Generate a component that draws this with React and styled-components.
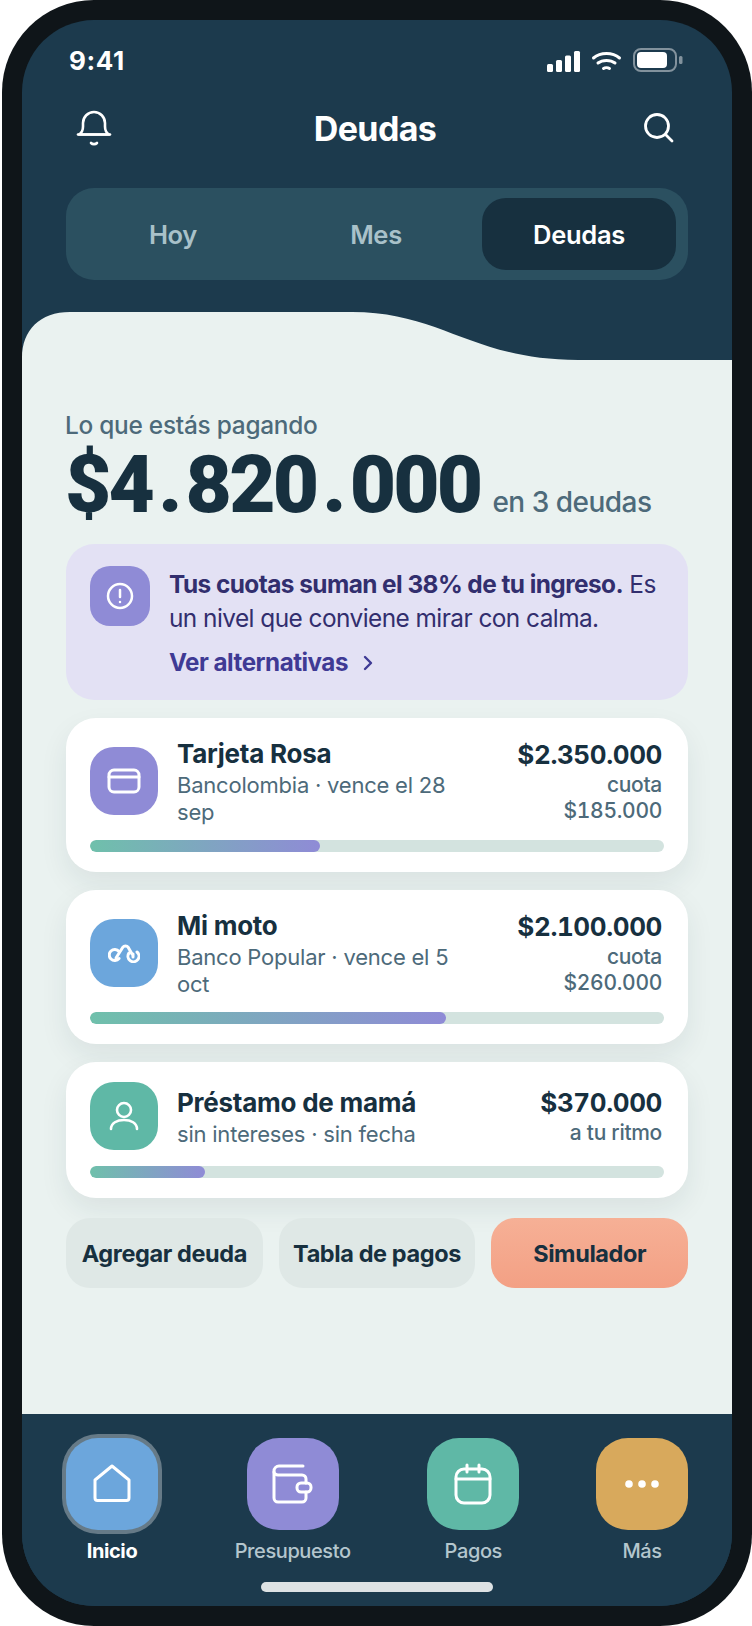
import React from 'react';
import styled, { createGlobalStyle } from 'styled-components';

const Global = createGlobalStyle`
  html, body {
    margin: 0;
    padding: 0;
    background: #fff;
  }
  body {
    font-family: 'Inter', 'Noto Sans', sans-serif;
  }
  * { box-sizing: border-box; }
`;

// Device
const Phone = styled.div`
  width: 750px;
  height: 1626px;
  margin-left: 2px;
  background: #0f1519;
  border-radius: 92px;
  padding: 20px;
`;

const Screen = styled.div`
  height: 100%;
  border-radius: 72px;
  overflow: hidden;
  background: #1c3a4d;
  display: flex;
  flex-direction: column;
`;

// Header
const StatusBar = styled.div`
  height: 38px;
  margin-top: 21px;
  padding: 0 49px 0 47px;
  display: flex;
  align-items: center;
  justify-content: space-between;
  color: #fff;
`;

const Clock = styled.span`
  font-size: 26px;
  font-weight: 700;
  letter-spacing: 0.6px;
`;

const StatusIcons = styled.svg`
  display: block;
`;

const TitleRow = styled.div`
  height: 48px;
  margin-top: 25px;
  padding: 0 58px 0 54px;
  display: grid;
  grid-template-columns: 1fr auto 1fr;
  align-items: center;
  & > svg:last-child { justify-self: end; }
`;

const Title = styled.h1`
  margin: 0;
  font-size: 34px;
  font-weight: 700;
  letter-spacing: -0.6px;
  color: #fff;
`;

const Segment = styled.div`
  margin: 36px 44px 0;
  height: 92px;
  padding: 10px 12px 10px 10px;
  border-radius: 28px;
  background: #2b5060;
  display: flex;
  gap: 9px;
`;

const Tab = styled.div`
  flex: 1;
  border-radius: 24px;
  display: flex;
  align-items: center;
  justify-content: center;
  font-size: 25.5px;
  font-weight: 600;
  letter-spacing: -0.3px;
  color: ${p => (p.$active ? '#fff' : '#a9c1c9')};
  background: ${p => (p.$active ? '#17303f' : 'transparent')};
`;

const Wave = styled.svg`
  display: block;
  margin-top: 32px;
  flex: none;
`;

// Main content
const Main = styled.main`
  flex: 1;
  background: #eaf2f0;
  padding: 50px 44px 0;
  display: flex;
  flex-direction: column;
`;

const Kicker = styled.div`
  font-size: 24.4px;
  line-height: 30px;
  font-weight: 500;
  letter-spacing: -0.25px;
  margin-left: -1px;
  color: #4d6a7a;
`;

const TotalRow = styled.div`
  display: flex;
  align-items: baseline;
  gap: 12px;
  margin-top: 3px;
`;

const Total = styled.div`
  font-family: 'Roboto', sans-serif;
  font-size: 80px;
  line-height: 84px;
  font-weight: 900;
  letter-spacing: -2.8px;
  margin-left: -1px;
  color: #17303f;
`;

const Dot = styled.span`
  margin: 0 6px;
`;

const TotalNote = styled.div`
  font-size: 28px;
  font-weight: 500;
  letter-spacing: -0.5px;
  color: #4d6a7a;
`;

const Alert = styled.div`
  margin-top: 17px;
  height: 156px;
  padding: 23px 24px;
  border-radius: 28px;
  background: #e3e1f4;
  display: flex;
  gap: 19px;
`;

const AlertIcon = styled.div`
  width: 60px;
  height: 60px;
  flex: none;
  margin-top: -1px;
  border-radius: 20px;
  background: #8f8bd6;
  display: flex;
  align-items: center;
  justify-content: center;
`;

const AlertText = styled.p`
  margin: 0;
  font-size: 24.4px;
  line-height: 34px;
  letter-spacing: -0.55px;
  color: #322e6e;
  strong { font-weight: 700; }
`;

const AlertLink = styled.div`
  margin-top: 11px;
  font-size: 24.2px;
  line-height: 34px;
  font-weight: 700;
  letter-spacing: -0.5px;
  color: #3f3a94;
  display: flex;
  align-items: center;
  gap: 15px;
`;

const Card = styled.div`
  margin-top: 18px;
  padding: 20px 24px;
  border-radius: 30px;
  background: #fff;
  box-shadow: 0 12px 28px rgba(23, 48, 63, 0.08);
`;

const CardRow = styled.div`
  display: flex;
  align-items: center;
  gap: 19px;
`;

const CardIcon = styled.div`
  width: 68px;
  height: 68px;
  flex: none;
  border-radius: 24px;
  background: ${p => p.$color};
  display: flex;
  align-items: center;
  justify-content: center;
`;

const CardBody = styled.div`
  flex: 1;
  min-width: 0;
`;

const CardName = styled.div`
  font-size: 26px;
  line-height: 32px;
  font-weight: 700;
  letter-spacing: -0.25px;
  color: #17303f;
`;

const CardSub = styled.div`
  margin: 2px 0 -2px;
  font-size: 22px;
  line-height: 27px;
  letter-spacing: -0.22px;
  color: #4d6a7a;
  max-width: 285px;
`;

const CardRight = styled.div`
  flex: none;
  width: 160px;
  margin-right: 2px;
  text-align: right;
`;

const Amount = styled.div`
  font-size: 26px;
  line-height: 32px;
  font-weight: 700;
  font-variant-numeric: tabular-nums;
  letter-spacing: -0.4px;
  color: #17303f;
`;

const AmountNote = styled.div`
  margin: 1px 0 -1px;
  font-size: 21px;
  line-height: 26px;
  font-weight: 500;
  letter-spacing: -0.3px;
  font-variant-numeric: tabular-nums;
  color: #4d6a7a;
`;

const Track = styled.div`
  margin-top: 16px;
  height: 12px;
  border-radius: 6px;
  background: #d3e3df;
  overflow: hidden;
`;

const Fill = styled.div`
  height: 100%;
  border-radius: 6px;
  background: linear-gradient(90deg, #6fc0ab, #8f8bd6);
`;

const Actions = styled.div`
  margin-top: 20px;
  display: flex;
  gap: 16px;
`;

const ActionButton = styled.div`
  flex: 1;
  height: 70px;
  border-radius: 24px;
  display: flex;
  align-items: center;
  justify-content: center;
  font-size: 23.5px;
  font-weight: 700;
  letter-spacing: -0.4px;
  color: #17303f;
  background: ${p => (p.$primary ? 'linear-gradient(180deg, #f6b096, #f3a084)' : '#dfe8e6')};
`;

// Bottom navigation
const BottomNav = styled.nav`
  flex: none;
  height: 192px;
  background: #1c3a4d;
  padding: 24px 44px 0;
  display: flex;
  flex-direction: column;
`;

const NavItems = styled.div`
  display: flex;
  justify-content: space-between;
`;

const NavItem = styled.div`
  min-width: 92px;
  display: flex;
  flex-direction: column;
  align-items: center;
`;

const NavIcon = styled.div`
  width: 92px;
  height: 92px;
  border-radius: 32px;
  background: ${p => p.$color};
  box-shadow: ${p => (p.$active ? '0 0 0 4px rgba(255, 255, 255, 0.33)' : 'none')};
  display: flex;
  align-items: center;
  justify-content: center;
`;

const NavLabel = styled.div`
  margin-top: 8px;
  font-size: 20px;
  line-height: 26px;
  font-weight: ${p => (p.$active ? 700 : 500)};
  letter-spacing: -0.4px;
  color: ${p => (p.$active ? '#fff' : '#b4c6cd')};
`;

const HomeBar = styled.div`
  width: 232px;
  height: 10px;
  margin: 18px auto 0;
  border-radius: 5px;
  background: #dde2e4;
`;

const Line = ({ w, h, children, sw = 3 }) => (
  <svg width={w} height={h} viewBox={`0 0 ${w} ${h}`} fill="none" stroke="#fff" strokeWidth={sw} strokeLinecap="round" strokeLinejoin="round">
    {children}
  </svg>
);

const debts = [
  {
    name: 'Tarjeta Rosa',
    sub: 'Bancolombia · vence el 28 sep',
    amount: '$2.350.000',
    note: <><div>cuota</div><div>$185.000</div></>,
    color: '#8f8bd6',
    pct: 40,
    icon: (
      <Line w={34} h={26}>
        <rect x="2" y="2" width="30" height="22" rx="5" />
        <path d="M2 9h30" />
      </Line>
    ),
  },
  {
    name: 'Mi moto',
    sub: 'Banco Popular · vence el 5 oct',
    amount: '$2.100.000',
    note: <><div>cuota</div><div>$260.000</div></>,
    color: '#6ca6dc',
    pct: 62,
    icon: (
      <Line w={32} h={20}>
        <path d="M11 8.500a5.500 5.500 0 1 0 0 7" />
        <path d="M21 10a5.500 5.500 0 1 0 8-1" />
        <path d="M25 11v3" />
        <path d="M8 15l7-11c1-1.500 4-1.500 5 0l4 7" />
      </Line>
    ),
  },
  {
    name: 'Préstamo de mamá',
    sub: 'sin intereses · sin fecha',
    amount: '$370.000',
    note: 'a tu ritmo',
    color: '#5fb8a6',
    pct: 20,
    icon: (
      <Line w={30} h={30} sw={2.6}>
        <circle cx="15" cy="9" r="7" />
        <path d="M2 28c0-6 6-9 13-9s13 3 13 9" />
      </Line>
    ),
  },
];

const navItems = [
  {
    label: 'Inicio',
    color: '#6ca6dc',
    active: true,
    icon: (
      <Line w={38} h={40}>
        <path d="M2 16L19 2l17 14v18a2.500 2.500 0 0 1-2.500 2.500h-29A2.500 2.500 0 0 1 2 34z" />
      </Line>
    ),
  },
  {
    label: 'Presupuesto',
    color: '#8f8bd6',
    icon: (
      <Line w={42} h={40}>
        <path d="M31 2H7a5 5 0 0 0-5 5v27a4 4 0 0 0 4 4h24a4 4 0 0 0 4-4v-6" />
        <path d="M2 8c0 1.500 2 3 4 3h24a4 4 0 0 1 4 4v4" />
        <rect x="25" y="19" width="14" height="9" rx="4" />
      </Line>
    ),
  },
  {
    label: 'Pagos',
    color: '#5fb8a6',
    icon: (
      <Line w={38} h={42}>
        <rect x="2" y="6" width="34" height="34" rx="8" />
        <path d="M2 16h34M13 2v7M25 2v7" />
      </Line>
    ),
  },
  {
    label: 'Más',
    color: '#d8a95c',
    icon: (
      <svg width="34" height="10" viewBox="0 0 34 10" fill="#fff">
        <circle cx="4" cy="5" r="3.800" />
        <circle cx="17" cy="5" r="3.800" />
        <circle cx="30" cy="5" r="3.800" />
      </svg>
    ),
  },
];

const App = () => (
  <>
    <Global />
    <Phone>
      <Screen>
        <StatusBar>
          <Clock>9:41</Clock>
          <StatusIcons width="136" height="26" viewBox="0 0 136 26">
            <g fill="#fff">
              <rect x="0" y="17" width="6" height="8" rx="1.500" />
              <rect x="9" y="13" width="6" height="12" rx="1.500" />
              <rect x="18" y="8.500" width="6" height="16.500" rx="1.500" />
              <rect x="27" y="4" width="6" height="21" rx="1.500" />
            </g>
            <g fill="none" stroke="#fff" strokeWidth="3" strokeLinecap="round">
              <path d="M46.500 11c7-6 19-6 26 0" />
              <path d="M51 16c4.500-3.500 12.500-3.500 17 0" />
              <path d="M56.500 21.500c1.500-1 4.500-1 6 0" />
            </g>
            <rect x="87" y="2" width="42" height="22" rx="7" fill="none" stroke="rgba(255,255,255,0.45)" strokeWidth="2" />
            <rect x="90" y="5" width="30" height="16" rx="4" fill="#fff" />
            <rect x="132" y="9" width="3.500" height="8" rx="1.500" fill="rgba(255,255,255,0.45)" />
          </StatusIcons>
        </StatusBar>

        <TitleRow>
          <Line w={36} h={38} sw={2.6}>
            <path d="M3 25.500c2.500-1.500 4-3.500 4-8V14a11 11 0 0 1 22 0v3.500c0 4.500 1.500 6.500 4 8z" />
            <path d="M2 25.500h32" />
            <path d="M15 34c1.500 1.500 4.500 1.500 6 0" />
          </Line>
          <Title>Deudas</Title>
          <Line w={30} h={30} sw={2.8}>
            <circle cx="13" cy="13" r="11.500" />
            <path d="M21.500 21.500l6.500 6.500" />
          </Line>
        </TitleRow>

        <Segment>
          <Tab>Hoy</Tab>
          <Tab>Mes</Tab>
          <Tab $active>Deudas</Tab>
        </Segment>

        <Wave width="710" height="48" viewBox="0 0 710 48">
          <path d="M0 48V46C0 18 18 0 48 0H330C420 0 450 48 556 48H710V48Z" fill="#eaf2f0" />
        </Wave>

        <Main>
          <Kicker>Lo que estás pagando</Kicker>
          <TotalRow>
            <Total>$4<Dot>.</Dot>820<Dot>.</Dot>000</Total>
            <TotalNote>en 3 deudas</TotalNote>
          </TotalRow>

          <Alert>
            <AlertIcon>
              <Line w={28} h={28} sw={2.5}>
                <circle cx="14" cy="14" r="12" />
                <path d="M14 8v7M14 20v.01" />
              </Line>
            </AlertIcon>
            <div>
              <AlertText>
                <strong>Tus cuotas suman el 38% de tu ingreso.</strong> Es un nivel que conviene mirar con calma.
              </AlertText>
              <AlertLink>
                Ver alternativas
                <svg width="10" height="16" viewBox="0 0 10 16" fill="none" stroke="#3f3a94" strokeWidth="2.400" strokeLinecap="round" strokeLinejoin="round">
                  <path d="M2 2l6 6-6 6" />
                </svg>
              </AlertLink>
            </div>
          </Alert>

          {debts.map(d => (
            <Card key={d.name}>
              <CardRow>
                <CardIcon $color={d.color}>{d.icon}</CardIcon>
                <CardBody>
                  <CardName>{d.name}</CardName>
                  <CardSub>{d.sub}</CardSub>
                </CardBody>
                <CardRight>
                  <Amount>{d.amount}</Amount>
                  <AmountNote>{d.note}</AmountNote>
                </CardRight>
              </CardRow>
              <Track>
                <Fill style={{ width: `${d.pct}%` }} />
              </Track>
            </Card>
          ))}

          <Actions>
            <ActionButton>Agregar deuda</ActionButton>
            <ActionButton>Tabla de pagos</ActionButton>
            <ActionButton $primary>Simulador</ActionButton>
          </Actions>
        </Main>

        <BottomNav>
          <NavItems>
            {navItems.map(n => (
              <NavItem key={n.label}>
                <NavIcon $color={n.color} $active={n.active}>{n.icon}</NavIcon>
                <NavLabel $active={n.active}>{n.label}</NavLabel>
              </NavItem>
            ))}
          </NavItems>
          <HomeBar />
        </BottomNav>
      </Screen>
    </Phone>
  </>
);

export default App;
